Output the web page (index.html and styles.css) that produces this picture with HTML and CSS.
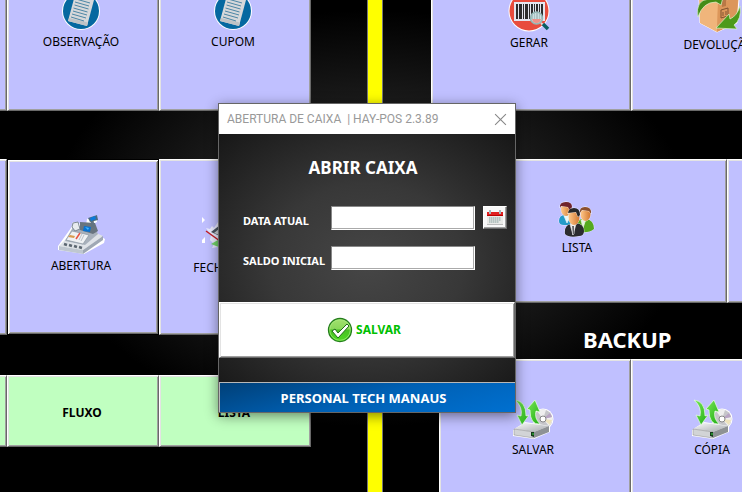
FILE: index.html
```html
<!DOCTYPE html>
<html lang="pt-BR">
<head>
<meta charset="utf-8">
<title>HAY-POS</title>
<link rel="stylesheet" href="styles.css">
</head>
<body>
<svg class="defs" aria-hidden="true">
  <defs>
    <linearGradient id="metal" x1="0" y1="0" x2="1" y2="1"><stop offset="0" stop-color="#fafafa"/><stop offset="1" stop-color="#a4a8ad"/></linearGradient>
    <linearGradient id="green" x1="0" y1="0" x2="1" y2="1"><stop offset="0" stop-color="#7be85a"/><stop offset="1" stop-color="#1fae12"/></linearGradient>
    <linearGradient id="skin" x1="0" y1="0" x2="1" y2="0"><stop offset="0" stop-color="#ffc98c"/><stop offset="1" stop-color="#d4782f"/></linearGradient>
    <linearGradient id="ball" x1="0" y1="0" x2="0" y2="1"><stop offset="0" stop-color="#a4e070"/><stop offset=".45" stop-color="#8ad85a"/><stop offset=".5" stop-color="#48c024"/><stop offset="1" stop-color="#4edb22"/></linearGradient>
    <symbol id="note" viewBox="0 0 40 40">
      <circle cx="20" cy="20" r="19" fill="#fff"/><circle cx="20" cy="20" r="18" fill="#0568a0"/>
      <path d="M14 4 33 9 26 35 7 30Z" fill="#d6d8da"/><path d="M7 30 26 35 27 32 25 31 8 27Z" fill="#bfc3c6"/>
      <path d="m15 8 14 4M14 11l14 4M13.500 14l14 4M12.500 17l14 4M12 20l14 4M11 23l14 4M10 26l13 4" stroke="#4d86a5" stroke-width="1"/>
    </symbol>
    <symbol id="barcode" viewBox="0 0 42 42">
      <circle cx="21" cy="21" r="20.500" fill="#fff"/><circle cx="21" cy="21" r="19.500" fill="#e84c3d"/>
      <path d="M6 12h31v19H6z" fill="#e4e6ef"/>
      <path d="M8 14h2v15H8zM11 14h3v15h-3zM15 14h1v15h-1zM17 14h3v15h-3zM21 14h1v15h-1zM23 14h2v15h-2zM26 14h1v15h-1zM28 14h2v15h-2zM31 14h1v15h-1zM33 14h2v15h-2z" fill="#2c2c2c"/>
      <circle cx="28.500" cy="28" r="6" fill="#c4dedf" fill-opacity=".85" stroke="#94b7b5" stroke-width="1.500"/><path d="M24 29h9q-1 4-4.500 4T24 29" fill="#ef9289"/>
      <path d="m33 33 2 2" stroke="#ddd" stroke-width="2"/><path d="m35 34 5 5" stroke="#075e63" stroke-width="3.500"/>
    </symbol>
    <symbol id="box" viewBox="0 0 46 46">
      <path d="m3 9 17-7 20 4 3 5-2 24-20 9L4 35Z" fill="#e4a065" stroke="#fff"/>
      <path d="m3 9 19 6-1 29L4 35Z" fill="#f0b57b"/><path d="m22 15 20-6-2 26-19 9Z" fill="#dc965a"/><path d="m3 9 17-6 22 6-20 6Z" fill="#f8cb98"/><path d="m29 6 6 2-5 5v5l-4 1v-6Z" fill="#b97845"/>
      <path d="m25 22 7-2v8l-7 2zM27 24v4m3-5v4" fill="none" stroke="#815330"/>
      <path d="M2 29Q-1 12 13 11L10 7 29 2 25 17 20 14Q7 14 2 29Z" fill="#438c17" stroke="#d9f2c8" stroke-width=".7"/>
      <path d="M44 18Q46 31 38 37l3 4-21-1 13-14 1 5Q41 28 44 18Z" fill="#4c9a1a" stroke="#d9f2c8" stroke-width=".7"/>
    </symbol>
    <symbol id="register" viewBox="0 0 48 40">
      <path d="m1 31 13-18 2-6 13 3 1-6 10-4v7l-4 2 2 9 10 6-1 4-20 11L1 35Z" fill="#fff"/>
      <path d="m2 31 8-8 27-6 9 4-20 14Z" fill="#dfe3e8"/><path d="m2 31 24 4v4L2 35Z" fill="#bfc7d0"/><path d="m26 35 20-14v4L26 39Z" fill="#9fa8b4"/>
      <path d="m8 26 8-14 20-2 5 9-13 11Z" fill="#a8b1bc"/><path d="m9 25 6-9 17 4-6 9Z" fill="#f0f2f4" stroke="#8b96a2" stroke-width=".7"/>
      <path d="m16 8 5-1 2 7-5 2-3-4Z" fill="#e8ebef" stroke="#7f8a96"/><path d="m23 7 15 1 3 8-5 3-13-4Z" fill="#68747f"/>
      <path d="m27 11 7 1-1 5-7-1Z" fill="#0872d2"/><path d="m28 12 4 1-1 2Z" fill="#43b8ff"/>
      <path d="m35 5 1 7" stroke="#627481" stroke-width="3"/><path d="m31 3 9-3 1 5-8 2Z" fill="#4d6b82"/><path d="m33 3 5-2 1 3-5 2Z" fill="#0b7bdc"/>
      <path d="m11 22 6 1 1-2-5-1z" fill="#d99b4f"/><path d="m19 24 4-6" stroke="#e65343" stroke-width="1.500"/><path d="m22 25 3-6m2 1-3 6" stroke="#b9c0c8"/>
      <path d="m7 29 3 1m2 0 3 1m2 0 3 1m2 0 3 1" stroke="#5c6771" stroke-width="2.500"/>
    </symbol>
    <symbol id="closing" viewBox="0 0 62 44">
      <path d="m0 4 3 3-3 3zM3 24l-3 3v3h3z" fill="#fff"/>
      <path d="m4 15 4 1 2-3 2 2 4-6v25l-6 1 2-4-4-4 1-5Z" fill="#fff" fill-opacity=".7"/>
      <path d="m9 31 7-4 28 5-12 8Z" fill="#74d66b"/><path d="m9 19 13-10 26 4-15 17Z" fill="#4c5661"/><path d="m12 20 11-9 20 4-12 12Z" fill="#cdd3d9"/>
      <path d="m4 18 32 23" stroke="#c61e24" stroke-width="1.500"/>
    </symbol>
    <symbol id="people" viewBox="0 0 38 36">
      <g stroke="#fff" stroke-opacity=".6" stroke-width="1" paint-order="stroke">
        <path d="M1 20q0-6 6-6h7l4 4-2 6H6q-5 0-5-4Z" fill="#249bc8"/><path d="m6 15 7-1-4 8Z" fill="#e9f7fb"/>
        <ellipse cx="8" cy="8" rx="5" ry="7" fill="url(#skin)"/><path d="M2 7q-1-6 6-6 6 0 6 5l-2 4-2-4-7-1Z" fill="#70242c"/>
        <path d="M20 30v-9q2-4 8-3 8 1 8 10-5 4-13 3Z" fill="#56a91d"/><path d="m23 19 5-1-3 9Z" fill="#eaf3df"/>
        <ellipse cx="27.500" cy="13" rx="5" ry="7" fill="url(#skin)"/><path d="M22 12q-1-6 5-6 7 0 6 7l-2-3-7-1Z" fill="#8a4f2e"/>
        <path d="M7 33q-1-9 6-10l5-1q8 1 8 8 0 5-5 5-10 2-14-2Z" fill="#2b2c2f"/><path d="m12 23 6 0-3 11Z" fill="#e6e6e7"/><path d="m14 25 2 0v8l-1 1Z" fill="#626468"/>
        <ellipse cx="16" cy="16" rx="5.500" ry="8" fill="url(#skin)"/><path d="M10 13q0-6 6-6t6 7l-2 2-2-5-8 1Z" fill="#27282a"/>
      </g>
    </symbol>
    <symbol id="backup" viewBox="0 0 42 40">
      <circle cx="31" cy="20" r="10.500" fill="#fff"/><circle cx="31" cy="20" r="9.500" fill="#c6c6ca"/><path d="m31 20-6-8q5-3 9-1Zm0 0 9-2q1 6-3 9Z" fill="#efefef"/><path d="m31 20 9 1-2 5Z" fill="#eee3bc"/><path d="m31 20 7-6 2 4Z" fill="#b8a4c4"/><circle cx="31" cy="20" r="3" fill="#fff" stroke="#888"/>
      <path d="m1 31 12-8 25 4v6L22 40 1 37Z" fill="#fff"/><path d="m2 30 11-6 24 3-15 6Z" fill="url(#metal)"/><path d="m2 30 20 3v6L2 36Z" fill="#d2d4d6" stroke="#888" stroke-width=".5"/><path d="m22 33 15-6v6l-15 6Z" fill="#8e9295"/><path d="m19 33 3 0v5l-3-1z" fill="#153a1a"/><path d="M21 34v2" stroke="#38dd43"/>
      <path d="M3 1q11 1 11 16l3-1-7 10L5 16l4 1Q11 8 3 1Z" fill="url(#green)" stroke="#e9ffe4" stroke-width=".7"/>
      <path d="m15 10 8-9 5 12-4-1q-2 7 4 13-10 1-10-14Z" fill="url(#green)" stroke="#e9ffe4" stroke-width=".7"/>
    </symbol>
  </defs>
</svg>
<main class="board">
  <section class="pane pane-left">
    <div class="tiles tall">
      <button class="tile" aria-label="Anterior"></button>
      <button class="tile"><svg class="icon note"><use href="#note"/></svg>OBSERVAÇÃO</button>
      <button class="tile"><svg class="icon note"><use href="#note"/></svg>CUPOM</button>
    </div>
    <div class="tiles tall">
      <button class="tile" aria-label="Caixa"></button>
      <button class="tile current"><svg class="icon register"><use href="#register"/></svg>ABERTURA</button>
      <button class="tile"><svg class="icon closing"><use href="#closing"/></svg>FECHAMENTO</button>
    </div>
    <div class="tiles short">
      <button class="tile mint" aria-label="Relatório"></button>
      <button class="tile mint">FLUXO</button>
      <button class="tile mint">LISTA</button>
    </div>
  </section>
  <div class="lane"><div class="stripe"></div></div>
  <section class="pane pane-right">
    <div class="tiles tall codes">
      <button class="tile"><svg class="icon barcode"><use href="#barcode"/></svg>GERAR</button>
      <button class="tile"><svg class="icon box"><use href="#box"/></svg>DEVOLUÇÃO</button>
    </div>
    <div class="tiles medium clients">
      <button class="tile"><svg class="icon people"><use href="#people"/></svg>LISTA</button>
      <button class="tile" aria-label="Clientes"></button>
    </div>
    <h2 class="section-title">BACKUP</h2>
    <div class="tiles medium copies">
      <button class="tile"><svg class="icon backup"><use href="#backup"/></svg>SALVAR</button>
      <button class="tile"><svg class="icon backup"><use href="#backup"/></svg>CÓPIA</button>
    </div>
  </section>
</main>
<form class="dialog" role="dialog" aria-labelledby="window-title">
  <header class="titlebar">
    <span id="window-title">ABERTURA DE CAIXA&nbsp; | HAY-POS 2.3.89</span>
    <button type="button" class="close" aria-label="Fechar"><svg viewBox="0 0 12 12"><path d="m1 1 10 10M11 1 1 11"/></svg></button>
  </header>
  <div class="content">
    <h1>ABRIR CAIXA</h1>
    <div class="fields">
      <label for="date">DATA ATUAL</label>
      <input id="date" type="text">
      <button type="button" class="calendar" aria-label="Calendário"><svg viewBox="0 0 18 18">
        <path d="M1 4h16v12H1z" fill="#e9e9e7"/><path d="M1 15h16v1H1z" fill="#bbb"/><path d="M1 3h16v4H1z" fill="#e02020"/><path d="M1 6h16v1H1z" fill="#b00"/>
        <path d="M4 1v4M14 1v4" stroke="#a8b8bc" stroke-width="2"/><path d="M3 9h12M3 11h12M3 13h10" stroke="#a5b8b5" stroke-width="1.500" stroke-dasharray="1.500 .5"/></svg></button>
      <label for="balance">SALDO INICIAL</label>
      <input id="balance" type="text">
    </div>
  </div>
  <button type="button" class="save"><svg viewBox="0 0 26 26">
    <circle cx="13" cy="13" r="11.500" fill="url(#ball)" stroke="#237d1c" stroke-width="1.300"/><circle cx="13" cy="13" r="10.300" fill="none" stroke="#a8ec80" stroke-width=".7"/>
    <path d="m5 14 3-2 3 4 9-9 2 2-11 12Z" fill="#fff" stroke="#1f6c18" stroke-width="1"/></svg>SALVAR</button>
  <div class="spacer"></div>
  <footer>PERSONAL TECH MANAUS</footer>
</form>
</body>
</html>
```
FILE: styles.css
```css
* { box-sizing: border-box; }

body {
  margin: 0;
  min-height: 100vh;
  position: relative;
  overflow: hidden;
  background: radial-gradient(ellipse 320px 210px at 50% 220px, #383838, #1e1e1e 50%, #000) #000;
  font: 12px/16px "Noto Sans", "DejaVu Sans", sans-serif;
  color: #000;
}

button, input { font: inherit; color: inherit; }
.defs { position: absolute; width: 0; height: 0; }

.board {
  display: grid;
  grid-template-columns: 1fr 120px 1fr;
  height: 100vh;
  overflow: hidden;
}

.pane { min-width: 0; overflow: hidden; display: flex; flex-direction: column; }
.pane > * { flex-shrink: 0; }
.tiles { display: grid; }
.pane .tall:first-child { margin-top: -65px; }

.pane-left .tiles { grid-template-columns: repeat(3, 152px); justify-content: end; margin-bottom: 48px; }
.pane-left .tall + .tall { margin-bottom: 40px; }
.tall { grid-auto-rows: 176px; }
.medium { grid-auto-rows: 144px; }
.short { grid-auto-rows: 72px; }

.codes { grid-template-columns: 200px 180px; margin-bottom: 48px; }
.clients { grid-template-columns: 296px 200px; }
.copies { grid-template-columns: 192px 166px; margin-left: 8px; }

.tile {
  display: flex;
  flex-direction: column;
  align-items: center;
  justify-content: center;
  gap: 3px;
  padding: 0 4px 6px 0;
  border: 1px solid;
  border-color: #fff #696969 #696969 #fff;
  box-shadow: inset 1px 1px #e3e3e3, inset -1px -1px #a0a0a0;
  background: #c0c0ff;
}
.mint { background: #c0ffc0; font-weight: 700; padding: 4px 2px 0 0; }
.current { outline: 1px solid #000; outline-offset: -1px; border-color: #000; box-shadow: inset 1px 1px #fff, inset -1px -1px #696969, inset 2px 2px #e3e3e3, inset -2px -2px #a0a0a0; }

.icon { display: block; }
.note { width: 40px; height: 40px; }
.barcode { width: 42px; height: 42px; }
.box { width: 46px; height: 46px; }
.register { width: 48px; height: 40px; }
.closing { width: 62px; height: 44px; }
.people { width: 38px; height: 36px; }
.backup { width: 42px; height: 40px; }

.section-title {
  margin: 23px 0 7px 152px;
  color: #fff;
  font-size: 22px;
  line-height: 26px;
}

.lane { display: flex; justify-content: center; padding-left: 8px; }
.stripe { width: 16px; background: #ff0; border: solid #777; border-width: 0 1px; }

.dialog {
  position: absolute;
  top: 103px;
  left: calc(50% - 153px);
  width: 298px;
  border: 1px solid #666;
  background: radial-gradient(ellipse 240px 200px at 50% 160px, #464646, #383838 40%, #101010) #101010;
  box-shadow: 0 3px 12px #0007;
  color: #fff;
}

.titlebar {
  display: flex;
  align-items: center;
  justify-content: space-between;
  height: 30px;
  padding: 0 8px;
  background: #fff;
  color: #999;
  font: 12px/16px Roboto, "Open Sans", sans-serif;
}
.close { display: flex; padding: 0; border: 0; background: none; }
.close svg { width: 13px; height: 13px; fill: none; stroke: #888; }

.content { padding: 22px 8px 32px 24px; }
h1 { margin: 0 0 26px; padding-right: 24px; font-size: 17px; line-height: 24px; text-align: center; }

.fields {
  display: grid;
  grid-template-columns: 80px 1fr 24px;
  grid-auto-rows: 24px;
  gap: 16px 8px;
  font-size: 11px;
  font-weight: 700;
}
.fields label { white-space: nowrap; padding-top: 7px; }
.fields input {
  min-width: 0;
  width: 100%;
  padding: 2px 4px;
  border: 1px solid;
  border-color: #888 #fff #fff #888;
  box-shadow: inset -1px -1px #aaa;
  background: #fff;
  color: #000;
}
.calendar {
  display: grid;
  place-items: center;
  height: 23px;
  padding: 0;
  border: 1px solid;
  border-color: #fff #696969 #696969 #fff;
  box-shadow: inset -1px -1px #a0a0a0;
  background: #f8f8f8;
}
.calendar svg { width: 18px; height: 18px; }

.save {
  display: flex;
  align-items: center;
  justify-content: center;
  gap: 3px;
  width: 100%;
  height: 56px;
  padding: 0 6px 0 0;
  border: 1px solid;
  border-color: #fff #696969 #696969 #fff;
  box-shadow: inset 1px 1px #e3e3e3, inset -1px -1px #a0a0a0;
  background: #fff;
  color: #00c000;
  font-size: 12px;
  font-weight: 700;
}
.save svg { width: 26px; height: 26px; }

.spacer { height: 24px; }
footer {
  padding: 6px 16px 5px 8px;
  border: solid #b8b8b8;
  border-width: 1px 0 0 1px;
  background: linear-gradient(165deg, #004078, #0060b4 50%, #0070d0);
  font-size: 13px;
  line-height: 18px;
  font-weight: 700;
  text-align: center;
}
```
